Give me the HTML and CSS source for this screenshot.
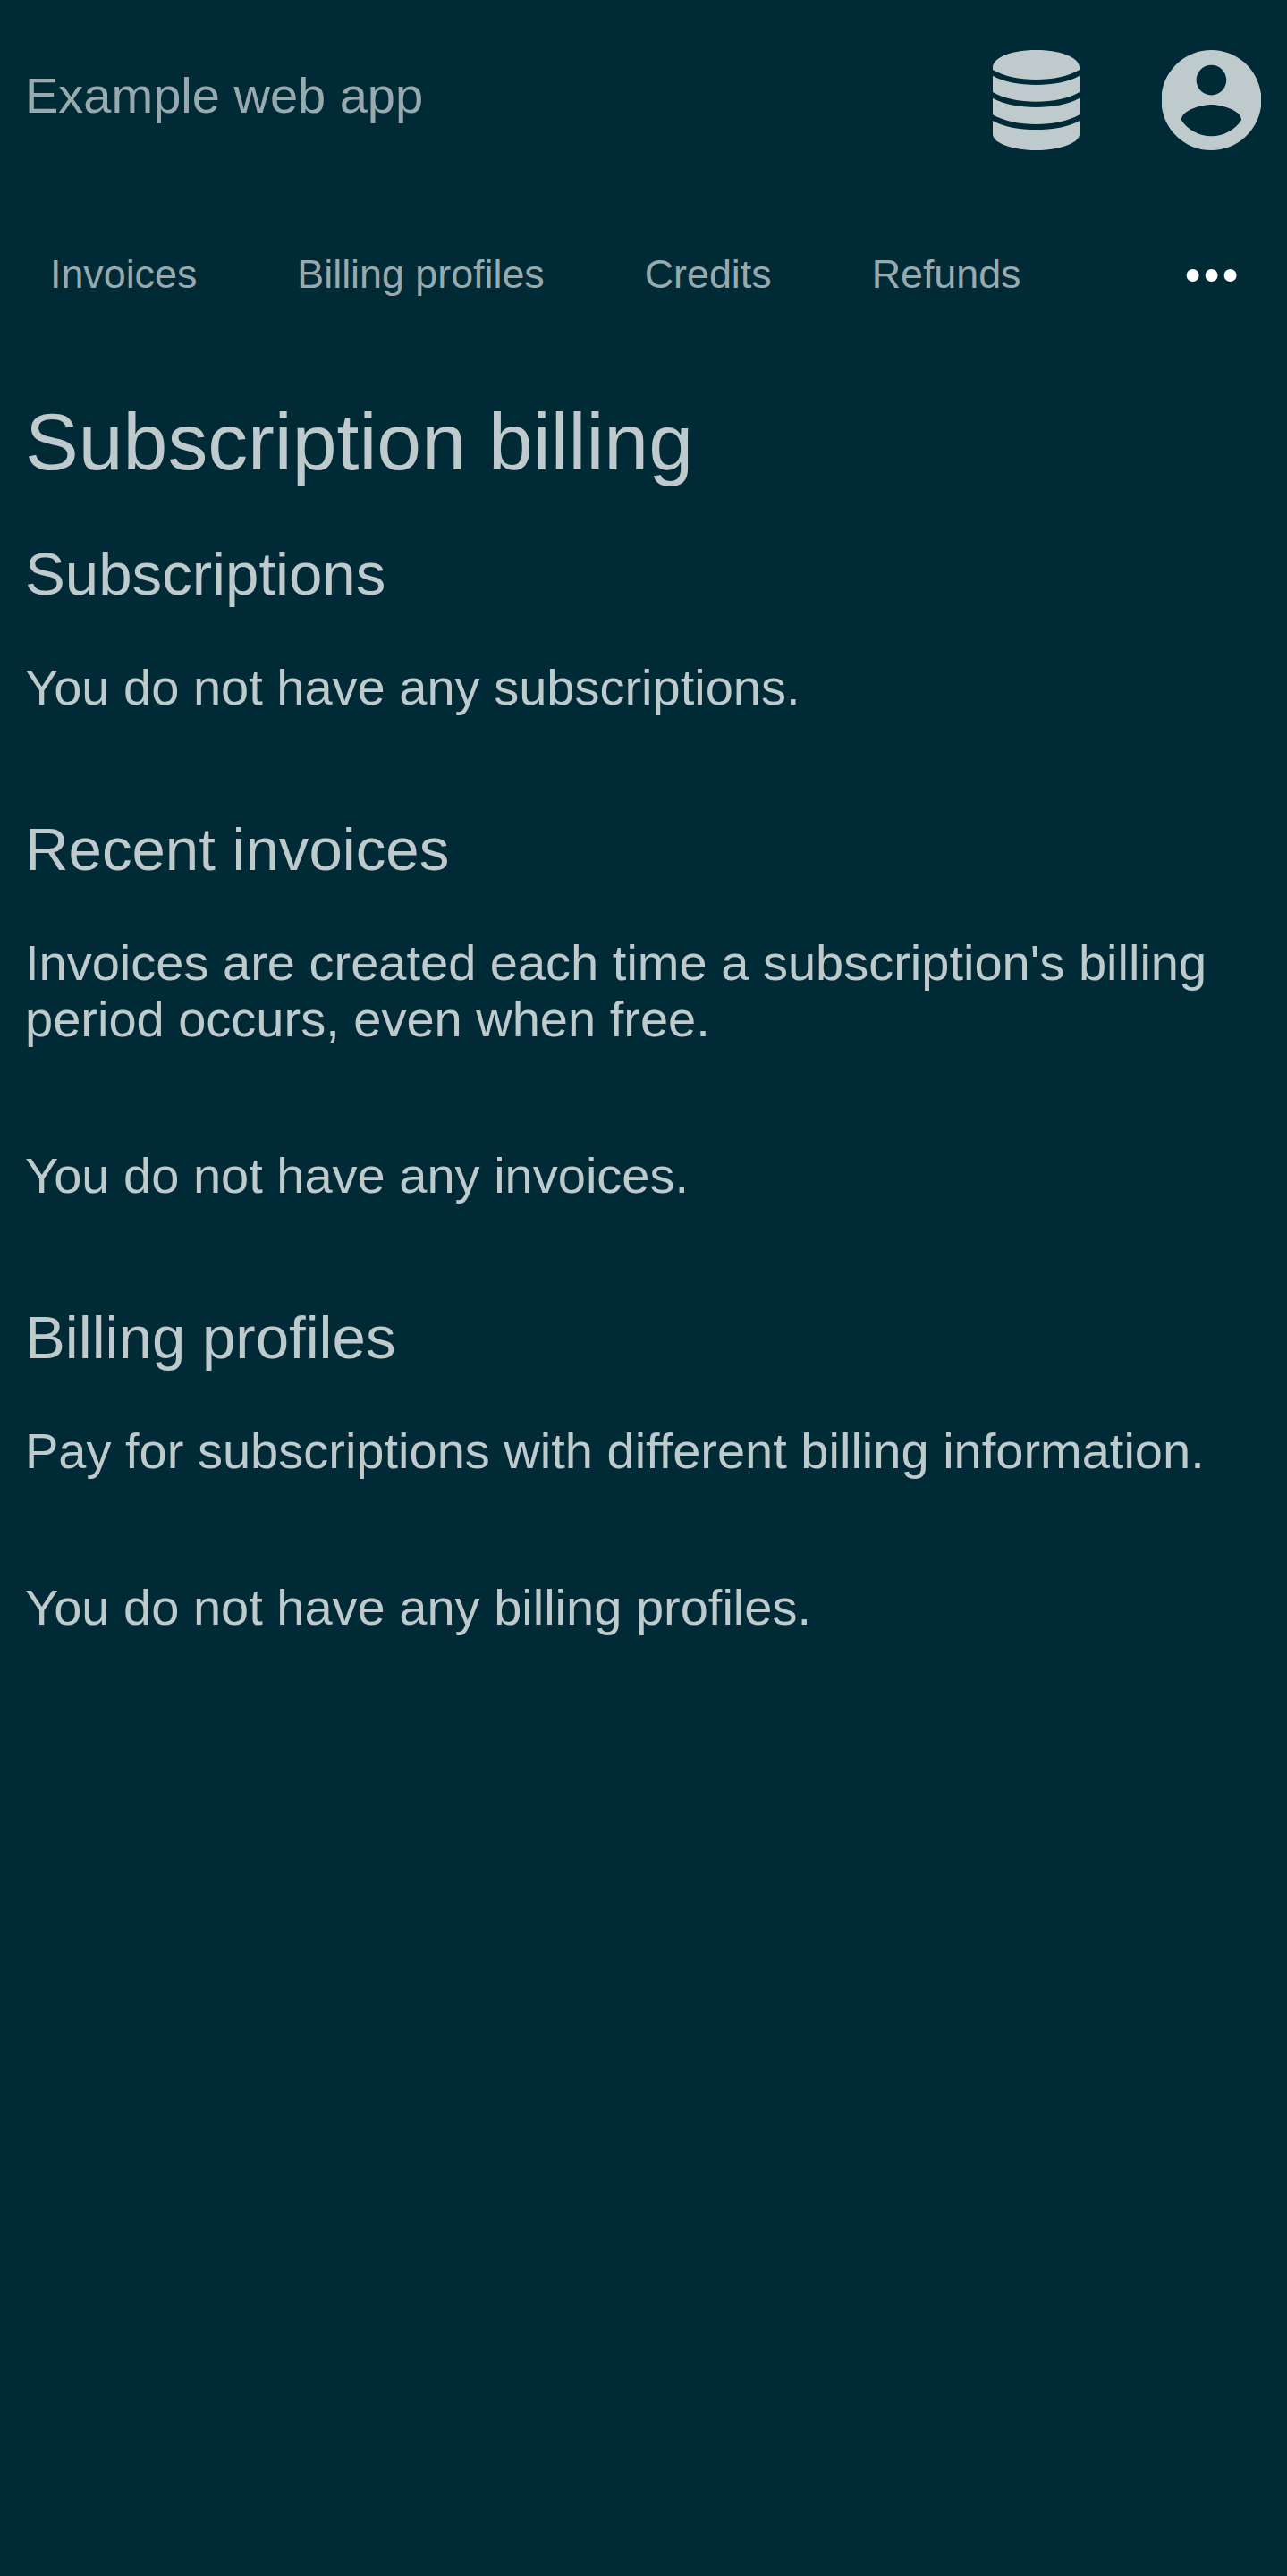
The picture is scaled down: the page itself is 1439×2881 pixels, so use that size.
FILE: index.html
```html
<!DOCTYPE html>
<html lang="en">
<head>
<meta charset="utf-8">
<title>Subscription billing</title>
<link rel="stylesheet" href="styles.css">
</head>
<body>
<header class="header">
  <a class="brand">Example web app</a>
  <div class="menus">
    <svg class="icon icon-db" viewBox="0 0 97 112"><path d="M0 19C1 7 24 0 48.500 0S96 7 97 19V22C85 29.300 67 33 48.500 33S12 29.300 0 22zM0 28.700C12 35.500 30 38.900 48.500 38.900S85 35.500 97 28.700V47C85 54.100 67 57.700 48.500 57.700S12 54.100 0 47zM0 53.800C12 60.600 30 64 48.500 64S85 60.600 97 53.800V72.200C85 79.200 67 82.900 48.500 82.900S12 79.200 0 72.200zM0 78.900C12 85.700 30 89.100 48.500 89.100S85 85.700 97 78.900V95C95 105 73 112 48.500 112S2 105 0 95z"/></svg>
    <svg class="icon icon-user" viewBox="2.100 2 19.820 20"><path d="M12 2C6.480 2 2 6.480 2 12s4.480 10 10 10 10-4.480 10-10S17.520 2 12 2zm0 3c1.660 0 3 1.340 3 3s-1.340 3-3 3-3-1.340-3-3 1.340-3 3-3zm0 14.200c-2.500 0-4.710-1.280-6-3.220.03-1.990 4-3.080 6-3.080 1.990 0 5.970 1.090 6 3.080-1.290 1.940-3.500 3.220-6 3.220z"/></svg>
  </div>
</header>
<nav class="nav">
  <a>Invoices</a><a>Billing profiles</a><a>Credits</a><a>Refunds</a>
  <svg class="more" viewBox="0.400 0 56 14"><circle cx="7" cy="7" r="7"/><circle cx="28" cy="7" r="7"/><circle cx="49" cy="7" r="7"/></svg>
</nav>
<main class="content">
  <h1>Subscription billing</h1>
  <section><h2>Subscriptions</h2><p>You do not have any subscriptions.</p></section>
  <section><h2>Recent invoices</h2><p>Invoices are created each time a subscription's billing period occurs, even when free.</p><p class="empty">You do not have any invoices.</p></section>
  <section><h2>Billing profiles</h2><p>Pay for subscriptions with different billing information.</p><p class="empty">You do not have any billing profiles.</p></section>
</main>
</body>
</html>
```
FILE: styles.css
```css
body { margin: 0; min-height: 2881px; background: #002b36; color: #bfcacd; font: 56px/63px "Liberation Sans", Arial, sans-serif; }
.header { display: flex; justify-content: space-between; height: 224px; padding: 0 29px 0 28px; box-sizing: border-box; }
.brand { padding-top: 75px; color: #99aaaf; }
.menus { display: flex; gap: 92px; padding-top: 56px; }
.icon { height: 112px; fill: #bfcacd; }
.icon-db { width: 97px; }
.icon-user { width: 111px; }
.nav { display: flex; align-items: center; height: 168px; padding: 0 56px; gap: 112px; box-sizing: border-box; font-size: 44.8px; color: #99aaaf; }
.nav a { padding-bottom: 4px; }
.more { width: 56px; height: 14px; margin-left: auto; fill: #fff; overflow: visible; }
.content { padding: 52px 28px 0; }
h1, h2, p { margin: 0; font-weight: normal; }
h1 { font-size: 89.6px; line-height: 100px; padding-bottom: 4px; }
section { padding-bottom: 56px; }
h2 { font-size: 67.2px; line-height: 75px; padding: 56px 0 2px; }
p { padding-top: 56px; }
.empty { padding-top: 112px; }
```
